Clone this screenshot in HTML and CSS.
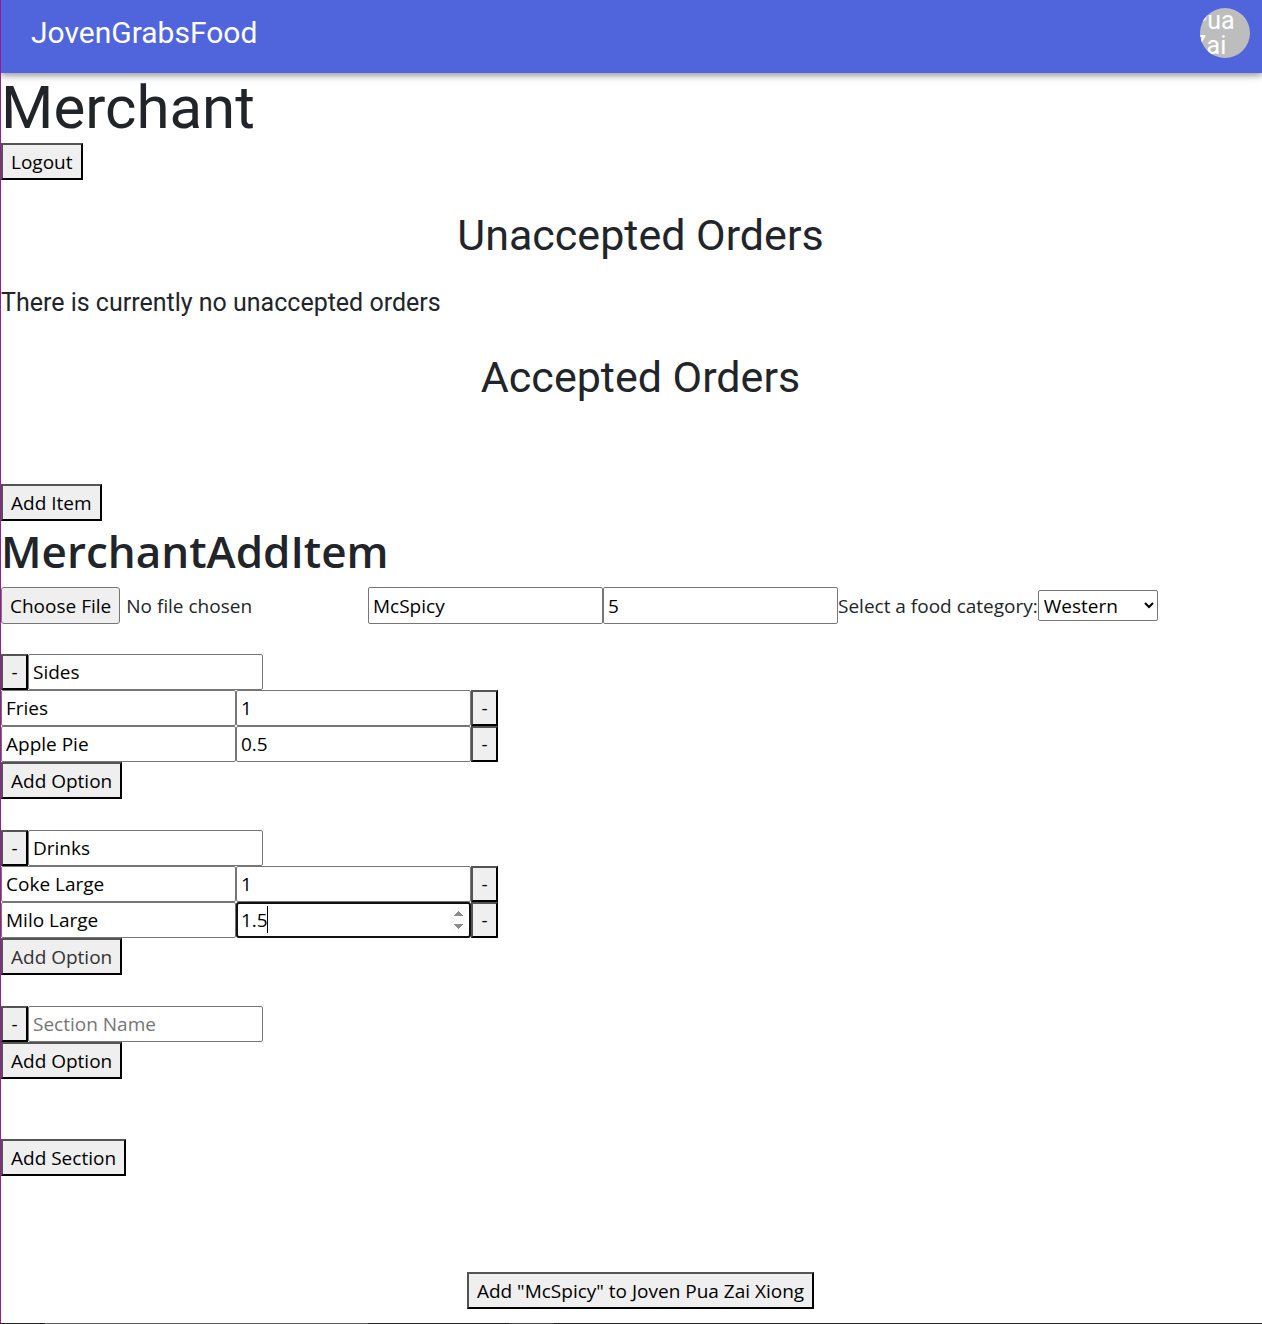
FILE: index.html
```html
<!DOCTYPE html>
<html lang="en">
<head>
<meta charset="utf-8">
<title>JovenGrabsFood</title>
<meta name="viewport" content="width=device-width, initial-scale=1">
<link rel="stylesheet" href="styles.css">
</head>
<body>
<div class="page">
  <header class="app-bar">
    <a class="brand" href="#">JovenGrabsFood</a>
    <div class="avatar"><span class="avatar-name">Joven Pua Zai Xiong</span></div>
  </header>
  <main>
    <h1 class="page-title">Merchant</h1>
    <button class="btn" type="button">Logout</button>

    <h2 class="orders-title">Unaccepted Orders</h2>
    <p class="orders-note">There is currently no unaccepted orders</p>
    <h2 class="orders-title">Accepted Orders</h2>

    <button class="btn add-item" type="button">Add Item</button>
    <h2 class="form-title">MerchantAddItem</h2>
    <form class="item-form">
      <div class="item-row">
        <input class="file" type="file" aria-label="Item image">
        <input class="field" type="text" value="McSpicy" aria-label="Item name">
        <input class="field" type="number" value="5" aria-label="Item price">
        <label for="category">Select a food category:</label>
        <select class="category" id="category"><option>Western</option></select>
      </div>

      <section class="section">
        <div class="row">
          <button class="btn remove" type="button" aria-label="Remove section">-</button>
          <input class="field" type="text" value="Sides" placeholder="Section Name" aria-label="Section name">
        </div>
        <div class="row">
          <input class="field" type="text" value="Fries" aria-label="Option name">
          <input class="field" type="number" value="1" aria-label="Option price">
          <button class="btn remove" type="button" aria-label="Remove option">-</button>
        </div>
        <div class="row">
          <input class="field" type="text" value="Apple Pie" aria-label="Option name">
          <input class="field" type="number" value="0.5" step="0.1" aria-label="Option price">
          <button class="btn remove" type="button" aria-label="Remove option">-</button>
        </div>
        <button class="btn add-option" type="button">Add Option</button>
      </section>

      <section class="section">
        <div class="row">
          <button class="btn remove" type="button" aria-label="Remove section">-</button>
          <input class="field" type="text" value="Drinks" placeholder="Section Name" aria-label="Section name">
        </div>
        <div class="row">
          <input class="field" type="text" value="Coke Large" aria-label="Option name">
          <input class="field" type="number" value="1" aria-label="Option price">
          <button class="btn remove" type="button" aria-label="Remove option">-</button>
        </div>
        <div class="row">
          <input class="field" type="text" value="Milo Large" aria-label="Option name">
          <span class="active-wrap">
            <input class="field active" type="number" value="1.5" step="0.1" aria-label="Option price">
            <span class="caret"></span>
          </span>
          <button class="btn remove" type="button" aria-label="Remove option">-</button>
        </div>
        <button class="btn add-option dim" type="button">Add Option</button>
      </section>

      <section class="section">
        <div class="row">
          <button class="btn remove" type="button" aria-label="Remove section">-</button>
          <input class="field" type="text" placeholder="Section Name" aria-label="Section name">
        </div>
        <button class="btn add-option" type="button">Add Option</button>
      </section>

      <button class="btn add-section" type="button">Add Section</button>
      <div class="submit-row">
        <button class="btn submit" type="submit">Add "McSpicy" to Joven Pua Zai Xiong</button>
      </div>
    </form>
  </main>
</div>
<div class="bottom-edge"></div>
</body>
</html>
```

FILE: styles.css
```css
* {
  box-sizing: border-box;
}

body {
  margin: 0;
  background: #fff;
  color: #212529;
  font-family: "Open Sans", "Noto Sans", sans-serif;
  font-size: 19px;
  line-height: 30px;
}

.page {
  border-left: 1px solid #9c1a94;
}

.app-bar {
  display: flex;
  justify-content: space-between;
  align-items: flex-start;
  height: 73px;
  padding: 8px 12px 0 30px;
  background: #5064dc;
  box-shadow: 0 2px 5px rgba(0, 0, 0, 0.2), 0 4px 6px rgba(0, 0, 0, 0.14), 0 1px 12px rgba(0, 0, 0, 0.12);
  clip-path: inset(0 0 -20px 0);
  font-family: Roboto, sans-serif;
}

.brand {
  color: #fff;
  font-size: 30px;
  line-height: 50px;
  text-decoration: none;
}

.avatar {
  display: flex;
  justify-content: center;
  align-items: center;
  width: 50px;
  height: 50px;
  overflow: hidden;
  border-radius: 50%;
  background: #bdbdbd;
  color: #fff;
  font-size: 25px;
  line-height: 25px;
}

.avatar-name {
  flex: none;
  width: min-content;
}

.page-title,
.orders-title,
.orders-note {
  margin: 0;
  font-family: Roboto, sans-serif;
  font-weight: 400;
}

.page-title {
  font-size: 60px;
  line-height: 70px;
}

.orders-title {
  padding: 29px 0 27px 18px;
  font-size: 43px;
  line-height: 52px;
  text-align: center;
}

.orders-note {
  margin-bottom: 4px;
  font-size: 25px;
  line-height: 30px;
}

.btn {
  display: block;
  height: 37px;
  padding: 0 8px;
  border: 2px outset #000;
  border-radius: 0;
  background: #efefef;
  color: #000;
  font: inherit;
  line-height: 32px;
  white-space: nowrap;
}

.add-item {
  margin-top: 54px;
}

.form-title {
  margin: 0 0 6px;
  font-size: 44px;
  font-weight: 600;
  line-height: 60px;
}

.item-row,
.row {
  display: flex;
  align-items: center;
}

.row {
  align-items: stretch;
  height: 36px;
}

.field {
  width: 235px;
  height: 37px;
  padding: 0 4px;
  border: 1px solid #767676;
  border-radius: 2px;
  background: #fff;
  color: #000;
  font: inherit;
}

.row .field {
  height: 36px;
}

.field::placeholder {
  color: #757575;
}

.file {
  width: 367px;
  font: inherit;
}

.file::file-selector-button {
  height: 37px;
  margin-right: 6px;
  padding: 0 8px;
  border: 1px solid #767676;
  border-radius: 3px;
  background: #efefef;
  color: #000;
  font: inherit;
}

.category {
  width: 120px;
  height: 31px;
  padding: 0 1px;
  border: 1px solid #767676;
  border-radius: 2px;
  background: #fff;
  color: #000;
  font: inherit;
}

.section {
  margin-top: 31px;
}

.section:first-of-type {
  margin-top: 30px;
}

.btn.remove {
  width: 27px;
  height: 36px;
  padding: 0;
}

.dim {
  color: #333;
}

.active-wrap {
  position: relative;
  display: flex;
}

.active {
  border: 2px solid #101010;
  border-radius: 3px;
  padding: 0 3px;
}

.active::-webkit-inner-spin-button {
  opacity: 1;
}

.caret {
  position: absolute;
  top: 4px;
  left: 31px;
  width: 1px;
  height: 27px;
  background: #000;
}

.add-section {
  margin-top: 60px;
}

.submit-row {
  display: flex;
  justify-content: center;
  padding: 96px 0 14px 18px;
}

.bottom-edge {
  height: 1px;
  background: linear-gradient(90deg, #222 45px, #5e5e5e 45px 368px, #222 368px 509px, #444 509px 554px, #222 554px);
}
```
